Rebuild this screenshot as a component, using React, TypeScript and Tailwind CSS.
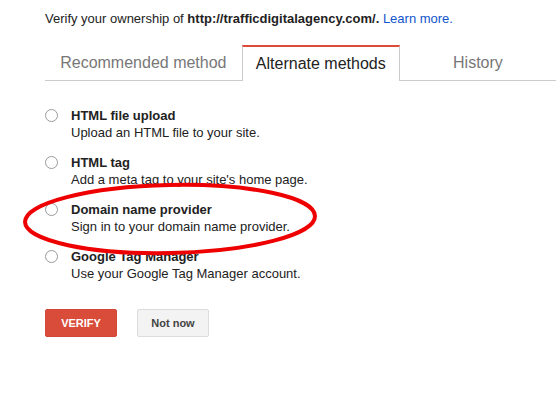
import React from "react";

const items = [
  { title: "HTML file upload", desc: "Upload an HTML file to your site." },
  { title: "HTML tag", desc: "Add a meta tag to your site's home page." },
  { title: "Domain name provider", desc: "Sign in to your domain name provider." },
  { title: "Google Tag Manager", desc: "Use your Google Tag Manager account." },
];

export default function App() {
  return (
    <div
      className="relative w-[556px] h-[394px] bg-white overflow-hidden text-[#222]"
      style={{ fontFamily: '"Liberation Sans", Arial, sans-serif' }}
    >
      <div className="pl-[45px] pt-[11px]">
        <p className="text-[13px] leading-[16px]">
          Verify your ownership of <b>http://trafficdigitalagency.com/.</b>{" "}
          <span className="text-[#1155cc]">Learn more.</span>
        </p>

        <div className="mt-[18px] flex h-[36px] border-b border-[#ccc]">
          <div className="w-[199px] flex items-center justify-center text-[16px] text-[#777]">
            Recommended method
          </div>
          <div className="w-[160px] h-[36px] flex items-center justify-center text-[16px] text-[#222] bg-white border-t-[2px] border-t-[#dd4b39] border-l border-r border-l-[#ccc] border-r-[#ccc]">
            Alternate methods
          </div>
          <div className="w-[158px] flex items-center justify-center text-[16px] text-[#777]">
            History
          </div>
        </div>

        <div className="mt-[26px] flex flex-col gap-[13px]">
          {items.map((it) => (
            <div key={it.title} className="flex">
              <div className="mt-[2px] w-[13px] h-[13px] rounded-full border border-[#999] bg-white shrink-0" />
              <div className="ml-[13px] text-[13px] leading-[17px]">
                <div className="font-bold">{it.title}</div>
                <div>{it.desc}</div>
              </div>
            </div>
          ))}
        </div>

        <div className="mt-[27px] flex gap-[20px]">
          <button className="w-[72px] h-[28px] rounded-[2px] bg-[#d94c3a] border border-[#d14836] text-white text-[11px] font-bold">
            VERIFY
          </button>
          <button className="w-[72px] h-[28px] rounded-[2px] bg-[#f3f3f3] border border-[#dcdcdc] text-[#444] text-[11px] font-bold">
            Not now
          </button>
        </div>
      </div>

      <svg className="absolute left-0 top-0 pointer-events-none" width="556" height="394">
        <ellipse
          cx="170"
          cy="219"
          rx="145"
          ry="34"
          fill="none"
          stroke="#ee0000"
          strokeWidth="4"
          transform="rotate(-1.2 170 219)"
        />
      </svg>
    </div>
  );
}
